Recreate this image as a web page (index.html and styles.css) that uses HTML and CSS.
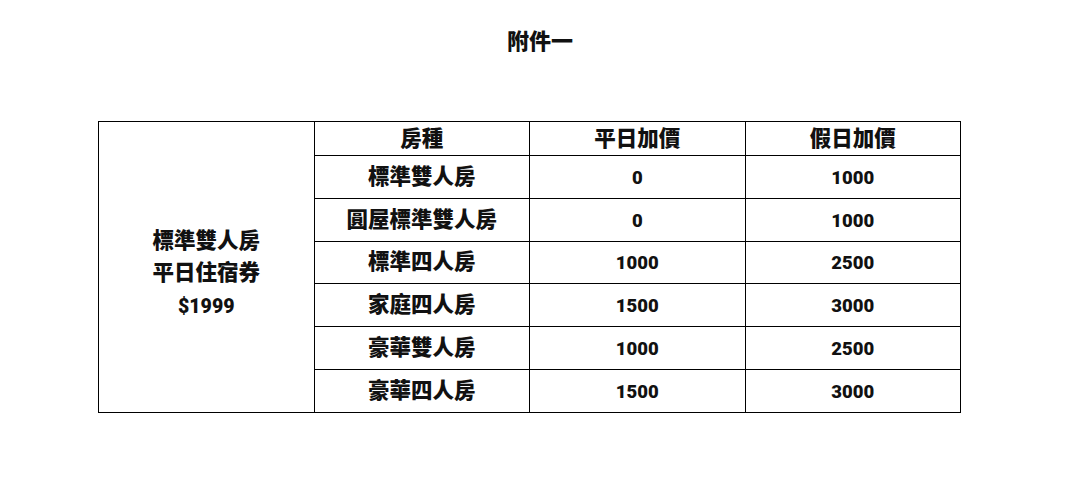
FILE: index.html
```html
<!DOCTYPE html>
<html lang="zh-Hant">
<head>
<meta charset="utf-8">
<link rel="stylesheet" href="styles.css">
</head>
<body>
<div class="page">
  <h1 class="title">附件一</h1>
  <table class="price-table">
    <tr class="head-row">
      <td class="voucher" rowspan="7">標準雙人房<br>平日住宿券<br><span class="num price">$1999</span></td>
      <th>房種</th>
      <th>平日加價</th>
      <th>假日加價</th>
    </tr>
    <tr><td>標準雙人房</td><td class="num">0</td><td class="num">1000</td></tr>
    <tr><td>圓屋標準雙人房</td><td class="num">0</td><td class="num">1000</td></tr>
    <tr><td>標準四人房</td><td class="num">1000</td><td class="num">2500</td></tr>
    <tr><td>家庭四人房</td><td class="num">1500</td><td class="num">3000</td></tr>
    <tr><td>豪華雙人房</td><td class="num">1000</td><td class="num">2500</td></tr>
    <tr><td>豪華四人房</td><td class="num">1500</td><td class="num">3000</td></tr>
  </table>
</div>
</body>
</html>
```
FILE: styles.css
```css
html, body {
  margin: 0;
  padding: 0;
  background: #fff;
}
body {
  font-family: Roboto, "Noto Sans CJK TC", sans-serif;
  font-weight: 900;
  color: #111;
}
.page {
  display: flex;
  flex-direction: column;
  align-items: center;
  padding-top: 28px;
}
.title {
  margin: 0;
  font-size: 22px;
  line-height: 28px;
  font-weight: 900;
}
.price-table {
  align-self: flex-start;
  margin-top: 65px;
  margin-left: 98px;
  border-collapse: collapse;
  width: 863px;
  table-layout: fixed;
}
.price-table th,
.price-table td {
  border: 1px solid #000;
  text-align: center;
  font-size: 21.5px;
  line-height: 28px;
  font-weight: 900;
  padding: 0;
  height: 41.8px;
}
.price-table th {
  height: 33px;
}
.price-table .num {
  font-size: 18.5px;
  position: relative;
  top: 1px;
}
.price-table .price {
  font-size: 19.5px;
}
.price-table .voucher {
  line-height: 32px;
  padding-top: 13px;
}
```
